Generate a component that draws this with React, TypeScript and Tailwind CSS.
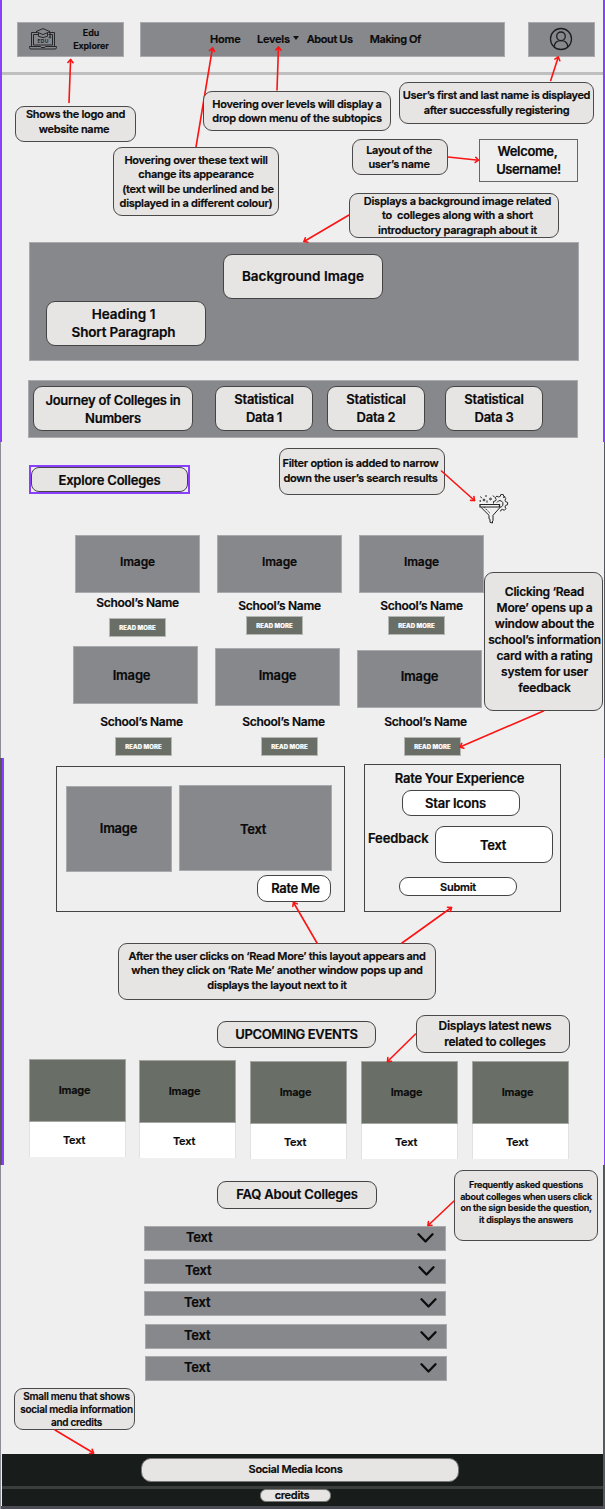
import type { ReactNode } from "react";

type Point = [number, number];

function Lines({ lines }: { lines: ReactNode[] }) {
  return (
    <>
      {lines.map((line, i) => (
        <span key={i} className="block whitespace-pre">
          {line}
        </span>
      ))}
    </>
  );
}

function Note({ className, lines }: { className: string; lines: ReactNode[] }) {
  return (
    <div
      className={`absolute flex flex-col items-center border border-[#4a4a4a] bg-[#e7e5e4] text-center ${className}`}
    >
      <Lines lines={lines} />
    </div>
  );
}

function Pill({ className, lines }: { className: string; lines: ReactNode[] }) {
  return (
    <div
      className={`flex flex-col items-center justify-center border border-[#444] text-center ${className}`}
    >
      <Lines lines={lines} />
    </div>
  );
}

function Arrow({ from, to }: { from: Point; to: Point }) {
  const a = Math.atan2(to[1] - from[1], to[0] - from[0]);
  const arm = (d: number) => `${to[0] - 4 * Math.cos(a + d)},${to[1] - 4 * Math.sin(a + d)}`;
  return (
    <g stroke="#fb1414" strokeWidth="1.600" fill="none" strokeLinecap="round" strokeLinejoin="round">
      <line x1={from[0]} y1={from[1]} x2={to[0]} y2={to[1]} />
      <polyline points={`${arm(0.7)} ${to[0]},${to[1]} ${arm(-0.7)}`} />
    </g>
  );
}

const arrows: [Point, Point][] = [
  [[69, 102.5], [70.6, 59.5]],
  [[277, 90], [278.5, 47]],
  [[550.7, 80.5], [558.3, 57]],
  [[448, 157], [478.5, 160.2]],
  [[349, 215], [304, 241.5]],
  [[441.5, 471], [474.5, 500.5]],
  [[543.5, 711], [460, 747]],
  [[317, 943], [293.5, 902.5]],
  [[402, 943], [451.5, 907.5]],
  [[415.5, 1034], [387.5, 1061.5]],
  [[454, 1201], [428, 1225.5]],
  [[55, 1430], [93.5, 1453]],
];

function LogoIcon() {
  return (
    <svg viewBox="0 0 28 22" className="h-[22px] w-[28px]" fill="none" stroke="#26272a" strokeWidth="1">
      <path d="M8 4.5H2.5V18M20 4.5h5.5V18M4.5 17V6.5H9M19.5 6.5h4V17M4.5 17h19" />
      <path d="M.5 18.5h11l.7 1h3.600l.7-1h11v1.200q0 1.300-1.500 1.300H2Q.5 21 .5 19.700z" />
      <path d="M14 .6l7 3-7 3-7-3zM9.500 5v3.300q4.500 2.600 9 0V5M21 3.800v4.500" />
      <circle cx="21" cy="9.300" r=".8" />
      <text x="14" y="15.300" textAnchor="middle" fontSize="5" fontWeight="700" letterSpacing=".3" fontFamily="Inter, sans-serif" fill="#26272a" stroke="none">
        EDU
      </text>
    </svg>
  );
}

function UserIcon() {
  return (
    <svg viewBox="0 0 24 24" className="size-[24px]" fill="none" stroke="#1d1e20" strokeWidth="1.300">
      <circle cx="12" cy="12" r="10.500" />
      <circle cx="12" cy="9.300" r="4.300" />
      <path d="M5.200 20q.3-6.400 6.800-6.400t6.800 6.400" />
    </svg>
  );
}

function FilterIcon() {
  return (
    <svg viewBox="0 0 30 30" className="h-[30px] w-[30px]" fill="none" stroke="#232323" strokeWidth="1">
      <path d="M1 10.500h19.500v2.500H1z" strokeWidth="1.200" />
      <path d="M2 13.300l8 8v3.500l1 .5v3l2.500.7v-2l.5-.5v-5.200l7-7.800" />
      <path d="M5 13.200l6 6" strokeDasharray="1.500 1" />
      <path d="M14.500 9.500v-2l2-.6.7-1.500-1-1.700 1.700-1.600 1.800.9 1.500-.6.700-2h2.200l.7 2 1.500.6M24 3.500l1.300-.6 1.500 1.500-.8 1.800.6 1.500 2 .7v2.300l-2 .7-.6 1.500.9 1.800-1.600 1.600-1.800-.9-1.500.6-.5 1.400" />
      <path d="M18 8.500q1.500-2.800 4.200-1.700 2.600 1.500 1.600 4.500-1 2-3.300 2" />
      <circle cx="5" cy="6" r=".9" />
      <circle cx="11.500" cy="5" r=".9" />
      <path d="M1.500 2.500l1.300 1.800M7 1v2M14 1.500l1.500 1.800M1.200 6v2M8 6.500v2.200" />
    </svg>
  );
}

function Chevron() {
  return (
    <svg viewBox="0 0 17 10" className="h-[10px] w-[17px]" fill="none" stroke="#0c0c0c" strokeWidth="2.300" strokeLinecap="round" strokeLinejoin="round">
      <path d="M1.500 1.300l7 7.200 7-7.200" />
    </svg>
  );
}

const gray = "border border-[#a9aaad] bg-[#87888c]";

type School = { col: string; label: string; name: string; btn: string };

const schools: School[] = [
  { col: "ml-[75px] pt-[14px]", label: "pb-[4px] text-[12px] tracking-[-0.12px]", name: "mt-[2px]", btn: "ml-[34px] mt-[7px]" },
  { col: "ml-[17px] pt-[14px]", label: "pb-[4px] text-[12px] tracking-[-0.12px]", name: "mt-[5px]", btn: "ml-[29px] mt-[2px]" },
  { col: "ml-[17px] pt-[14px]", label: "pb-[4px] text-[12px] tracking-[-0.12px]", name: "mt-[5px]", btn: "ml-[29px] mt-[2px]" },
  { col: "ml-[73px] pt-[5px]", label: "pr-[8px] pt-px text-[13px] tracking-[-0.18px]", name: "ml-[12px] mt-[10px]", btn: "ml-[42px] mt-[7px]" },
  { col: "ml-[17px] pt-[7px]", label: "pb-[2px] text-[13px] tracking-[-0.18px]", name: "ml-[12px] mt-[8px]", btn: "ml-[46px] mt-[7px]" },
  { col: "ml-[17px] pt-[9px]", label: "pb-[5px] text-[13px] tracking-[-0.18px]", name: "ml-[12px] mt-[6px]", btn: "ml-[47px] mt-[7px]" },
];

function SchoolCard({ s }: { s: School }) {
  return (
    <div className={`w-[125px] shrink-0 ${s.col}`}>
      <div className={`flex h-[58px] w-[125px] items-center justify-center ${gray}`}>
        <span className={s.label}>Image</span>
      </div>
      <p className={`text-center text-[12px] leading-[16px] tracking-[-0.26px] ${s.name}`}>School’s Name</p>
      <div
        className={`flex h-[19px] w-[57px] items-center justify-center border border-[#b5b7b5] bg-[#696e67] text-[6px] font-extrabold tracking-[0.1px] text-white ${s.btn}`}
      >
        READ MORE
      </div>
    </div>
  );
}

const events = [
  "mt-0 ml-[29px]",
  "mt-[1px] ml-[13px]",
  "mt-[2px] ml-[14px]",
  "mt-[2px] ml-[14px]",
  "mt-[2px] ml-[14px]",
];

const faqs = [
  { row: "ml-[144px]", text: "ml-[41px]", icon: "mr-[11px]" },
  { row: "ml-[144px] mt-[8px]", text: "ml-[40px]", icon: "mr-[10px]" },
  { row: "ml-[144px] mt-[7px]", text: "ml-[39px]", icon: "mr-[8px]" },
  { row: "ml-[145px] mt-[8px]", text: "ml-[38px]", icon: "mr-[9px]" },
  { row: "ml-[145px] mt-[7px]", text: "ml-[38px]", icon: "mr-[9px]" },
];

export default function App() {
  return (
    <div className="relative flex h-[1509px] w-[605px] flex-col overflow-hidden bg-[#efefef] font-['Inter','Liberation_Sans',sans-serif] text-[11px] font-semibold text-[#0a0a0a] [-webkit-text-stroke:0.2px]">
      <header className="flex h-[75px] shrink-0 items-start border-b-[3px] border-[#bfbfbf] pt-[22px]">
        <div className={`ml-[17px] flex h-[35px] w-[107px] items-center ${gray}`}>
          <span className="-mt-px ml-[11px]">
            <LogoIcon />
          </span>
          <div className="-mt-px ml-[8px] w-[52px] text-center text-[9px] leading-[13px] tracking-[-0.08px]">
            <Lines lines={["Edu", "Explorer"]} />
          </div>
        </div>
        <nav className={`ml-[16px] flex h-[35px] w-[365px] items-center whitespace-nowrap pl-[69px] ${gray}`}>
          <span className="w-[47px] tracking-[-0.2px]">Home</span>
          <span className="tracking-[-0.25px]">Levels</span>
          <svg viewBox="0 0 6 4" className="mb-[3px] ml-[3px] h-[4px] w-[6px]">
            <path d="M0 0h6L3 4z" fill="#111" />
          </svg>
          <span className="ml-[8px] w-[63px] tracking-[-0.4px]">About Us</span>
          <span className="tracking-[-0.38px]">Making Of</span>
        </nav>
        <div className={`ml-[23px] flex h-[35px] w-[67px] items-center justify-center pb-[2px] pr-px ${gray}`}>
          <UserIcon />
        </div>
      </header>

      <div className="h-[167px] shrink-0 pl-[479px] pt-[64px]">
        <div className="h-[43px] w-[99px] border border-[#666] pt-[2px] text-center text-[13px] leading-[18px]">
          <span className="block pr-[2px] tracking-[-0.34px]">Welcome,</span>
          <span className="block tracking-[-0.44px]">Username!</span>
        </div>
      </div>

      <section className={`ml-[29px] h-[119px] w-[550px] shrink-0 text-[13.5px] leading-[18px] ${gray}`}>
        <Pill className="ml-[193px] mt-[11px] h-[45px] w-[160px] rounded-[9px] bg-[#e7e5e4] pb-[2px]" lines={["Background Image"]} />
        <Pill
          className="ml-[16px] mt-[2px] h-[45px] w-[160px] rounded-[9px] bg-[#e7e5e4] pb-px pr-[5px]"
          lines={["Heading 1", <span className="tracking-[-0.18px]">Short Paragraph</span>]}
        />
      </section>

      <section
        className={`ml-[28px] mt-[19px] flex h-[58px] w-[550px] shrink-0 items-start pt-[5px] text-[13px] leading-[18px] tracking-[-0.26px] ${gray}`}
      >
        <Pill className="ml-[4px] h-[45px] w-[160px] rounded-[9px] bg-[#e7e5e4]" lines={["Journey of Colleges in", "Numbers"]} />
        <Pill className="ml-[22px] h-[45px] w-[98px] rounded-[9px] bg-[#e7e5e4] pb-px" lines={["Statistical", "Data 1"]} />
        <Pill className="ml-[14px] h-[45px] w-[98px] rounded-[9px] bg-[#e7e5e4] pb-px" lines={["Statistical", "Data 2"]} />
        <Pill className="ml-[20px] h-[45px] w-[98px] rounded-[9px] bg-[#e7e5e4] pb-px" lines={["Statistical", "Data 3"]} />
      </section>

      <section className="flex h-[83px] shrink-0 items-start pl-[29px] pt-[27px]">
        <div className="h-[29px] w-[161px] border-2 border-[#8a3ffc] bg-[#efefef]">
          <Pill className="h-[25px] w-[157px] rounded-[8px] bg-[#e7e5e4] pt-[2px] text-[13px] tracking-[-0.22px]" lines={["Explore Colleges"]} />
        </div>
        <span className="ml-[289px] mt-[29px]">
          <FilterIcon />
        </span>
      </section>

      <section className="shrink-0">
        <div className="flex h-[120px] items-start">
          {schools.slice(0, 3).map((s, i) => (
            <SchoolCard key={i} s={s} />
          ))}
        </div>
        <div className="flex h-[122px] items-start">
          {schools.slice(3).map((s, i) => (
            <SchoolCard key={i} s={s} />
          ))}
        </div>
      </section>

      <section className="flex h-[258px] shrink-0 items-start text-[13px] leading-[16px] tracking-[-0.24px]">
        <div className="ml-[56px] mt-[3px] h-[146px] w-[289px] border border-[#444]">
          <div className="flex items-start pl-[9px] pt-[18px]">
            <div className={`mt-px flex h-[86px] w-[106px] items-center justify-center pb-[3px] pr-px ${gray}`}>Image</div>
            <div className={`ml-[7px] flex h-[86px] w-[153px] items-center justify-center pt-[2px] pr-[5px] ${gray}`}>Text</div>
          </div>
          <Pill className="ml-[200px] mt-[3px] h-[27px] w-[74px] rounded-[10px] bg-white pb-[2px] pl-[3px] tracking-[-0.38px]" lines={["Rate Me"]} />
        </div>
        <div className="ml-[19px] mt-px h-[148px] w-[197px] border border-[#444]">
          <p className="mt-[5px] pr-[6px] text-center">Rate Your Experience</p>
          <Pill className="ml-[37px] mt-[4px] h-[26px] w-[118px] rounded-[9px] bg-white pr-[11px]" lines={["Star Icons"]} />
          <div className="mt-[10px] flex">
            <span className="w-[70px] pl-[3px] pt-[4px] tracking-[-0.1px]">Feedback</span>
            <Pill className="h-[37px] w-[118px] rounded-[9px] bg-white pr-[2px]" lines={["Text"]} />
          </div>
          <Pill className="ml-[34px] mt-[14px] h-[19px] w-[118px] rounded-[9px] bg-white text-[11px]" lines={["Submit"]} />
        </div>
      </section>

      <section className="h-[160px] shrink-0">
        <Pill className="ml-[217px] h-[27px] w-[159px] rounded-[9px] bg-[#e7e5e4] pt-px text-[13px] tracking-[-0.38px]" lines={["UPCOMING EVENTS"]} />
        <div className="mt-[11px] flex items-start text-[11px] tracking-[-0.19px]">
          {events.map((place, i) => (
            <article key={i} className={`w-[97px] shrink-0 ${place}`}>
              <div className="flex h-[63px] items-center justify-center border border-[#a3a6a2] bg-[#696e67] pr-[6px]">Image</div>
              <div className="flex h-[35px] items-center justify-center border-x border-[#e2e2e2] bg-white pr-[7px] pt-px">Text</div>
            </article>
          ))}
        </div>
      </section>

      <section className="h-[273px] shrink-0">
        <Pill className="ml-[217px] h-[28px] w-[160px] rounded-[9px] bg-[#e7e5e4] text-[13px] tracking-[-0.2px]" lines={["FAQ About Colleges"]} />
        <div className="mt-[17px] text-[13px] tracking-[-0.2px]">
          {faqs.map((f, i) => (
            <div key={i} className={`flex h-[25px] w-[302px] items-center justify-between pb-px ${gray} ${f.row}`}>
              <span className={f.text}>Text</span>
              <span className={f.icon}>
                <Chevron />
              </span>
            </div>
          ))}
        </div>
      </section>

      <footer className="ml-[2px] h-[55px] w-[601px] shrink-0 bg-[#181d1c]">
        <div className="h-[32px] pl-[139px] pt-[4px]">
          <Pill className="h-[24px] w-[318px] rounded-[10px] border-[#777] bg-[#e7e5e4] pb-px pr-[9px] tracking-[-0.32px]" lines={["Social Media Icons"]} />
        </div>
        <div className="h-[20px] border-t-[3px] border-[#3a3e3d] pl-[258px]">
          <Pill className="h-[13px] w-[71px] rounded-[6px] border-[#777] bg-[#e7e5e4] pr-[7px] leading-[11px] tracking-[-0.27px]" lines={["credits"]} />
        </div>
        <div className="-ml-[2px] h-[3px] w-[605px] bg-[#4b4c55]" />
      </footer>

      <svg className="pointer-events-none absolute inset-0" width="605" height="1509">
        <Arrow from={[196, 147]} to={[212.5, 48]} />
      </svg>

      <Note className="left-[15px] top-[106px] h-[36px] w-[121px] rounded-[9px] leading-[14.5px] tracking-[-0.28px]" lines={["Shows the logo and", <span className="pr-[3px]">website name</span>]} />
      <Note className="left-[203px] top-[91px] h-[40px] w-[188px] rounded-[9px] pt-[5px] leading-[14px] tracking-[-0.28px]" lines={["Hovering over levels will display a", "drop down menu of the subtopics"]} />
      <Note className="left-[113px] top-[147px] h-[69px] w-[166px] rounded-[9px] pt-[5px] leading-[14.3px] tracking-[-0.27px]" lines={["Hovering over these text will", "change its appearance", <span className="pl-[4px]">(text will be underlined and be</span>, "displayed in a different colour)"]} />
      <Note className="left-[399px] top-[82px] h-[42px] w-[195px] rounded-[9px] pt-[5px] leading-[14.8px] tracking-[-0.34px]" lines={["User’s first and last name is displayed", "after successfully registering"]} />
      <Note className="left-[352px] top-[139px] h-[36px] w-[96px] rounded-[9px] pr-[2px] pt-[3px] leading-[14px] tracking-[-0.3px]" lines={["Layout of the", "user’s name"]} />
      <Note className="left-[349px] top-[193px] h-[45px] w-[210px] rounded-[9px] pl-[7px] leading-[14.4px] tracking-[-0.24px]" lines={["Displays a background image related", "to  colleges along with a short", "introductory paragraph about it"]} />
      <Note className="left-[279px] top-[448px] h-[47px] w-[166px] rounded-[9px] pr-[3px] pt-[7px] leading-[15px] tracking-[-0.28px]" lines={["Filter option is added to narrow", "down the user’s search results"]} />
      <Note className="left-[484px] top-[572px] h-[139px] w-[119px] rounded-[9px] pl-[2px] pt-[11px] text-[12px] leading-[16px] tracking-[-0.25px]" lines={["Clicking ‘Read", "More’ opens up a", "window about the", "school’s information", "card with a rating", "system for user", "feedback"]} />
      <Note className="left-[118px] top-[943px] h-[57px] w-[318px] rounded-[9px] pt-[5px] leading-[14.4px] tracking-[-0.3px]" lines={["After the user clicks on ‘Read More’ this layout appears and", "when they click on ‘Rate Me’ another window pops up and", "displays the layout next to it"]} />
      <Note className="left-[416px] top-[1015px] h-[38px] w-[154px] rounded-[9px] pl-[4px] pt-[2px] text-[12px] leading-[15.700px] tracking-[-0.28px]" lines={["Displays latest news", "related to colleges"]} />
      <Note className="left-[454px] top-[1170px] h-[71px] w-[144px] rounded-[9px] pt-[8px] text-[9px] leading-[11.700px] tracking-[-0.24px]" lines={["Frequently asked questions", "about colleges when users click", "on the sign beside the question,", "it displays the answers"]} />
      <Note className="left-[14px] top-[1388px] h-[42px] w-[121px] rounded-[9px] pl-[4px] pt-px text-[10px] leading-[13px] tracking-[-0.25px]" lines={["Small menu that shows", "social media information", "and credits"]} />

      <svg className="pointer-events-none absolute inset-0" width="605" height="1509">
        {arrows.map(([from, to], i) => (
          <Arrow key={i} from={from} to={to} />
        ))}
      </svg>

      <div className="absolute inset-y-0 left-0 flex w-[4px] flex-col">
        <div className="h-[442px] w-[2px] bg-[#8a3ffc]" />
        <div className="h-[316px] w-px bg-[#8d8e93]" />
        <div className="h-[407px] w-[4px] border-l-2 border-[#57565f] bg-[#8a3ffc]" />
        <div className="w-px grow bg-[#8d8e93]" />
      </div>
      <div className="absolute inset-y-0 right-0 flex w-[2px] flex-col items-end">
        <div className="h-[442px] w-[2px] bg-[#8a3ffc]" />
        <div className="h-[316px] w-px bg-[#55575c]" />
        <div className="h-[407px] w-px bg-[#8a3ffc]" />
        <div className="w-[2px] grow bg-[#55595c]" />
      </div>
    </div>
  );
}
